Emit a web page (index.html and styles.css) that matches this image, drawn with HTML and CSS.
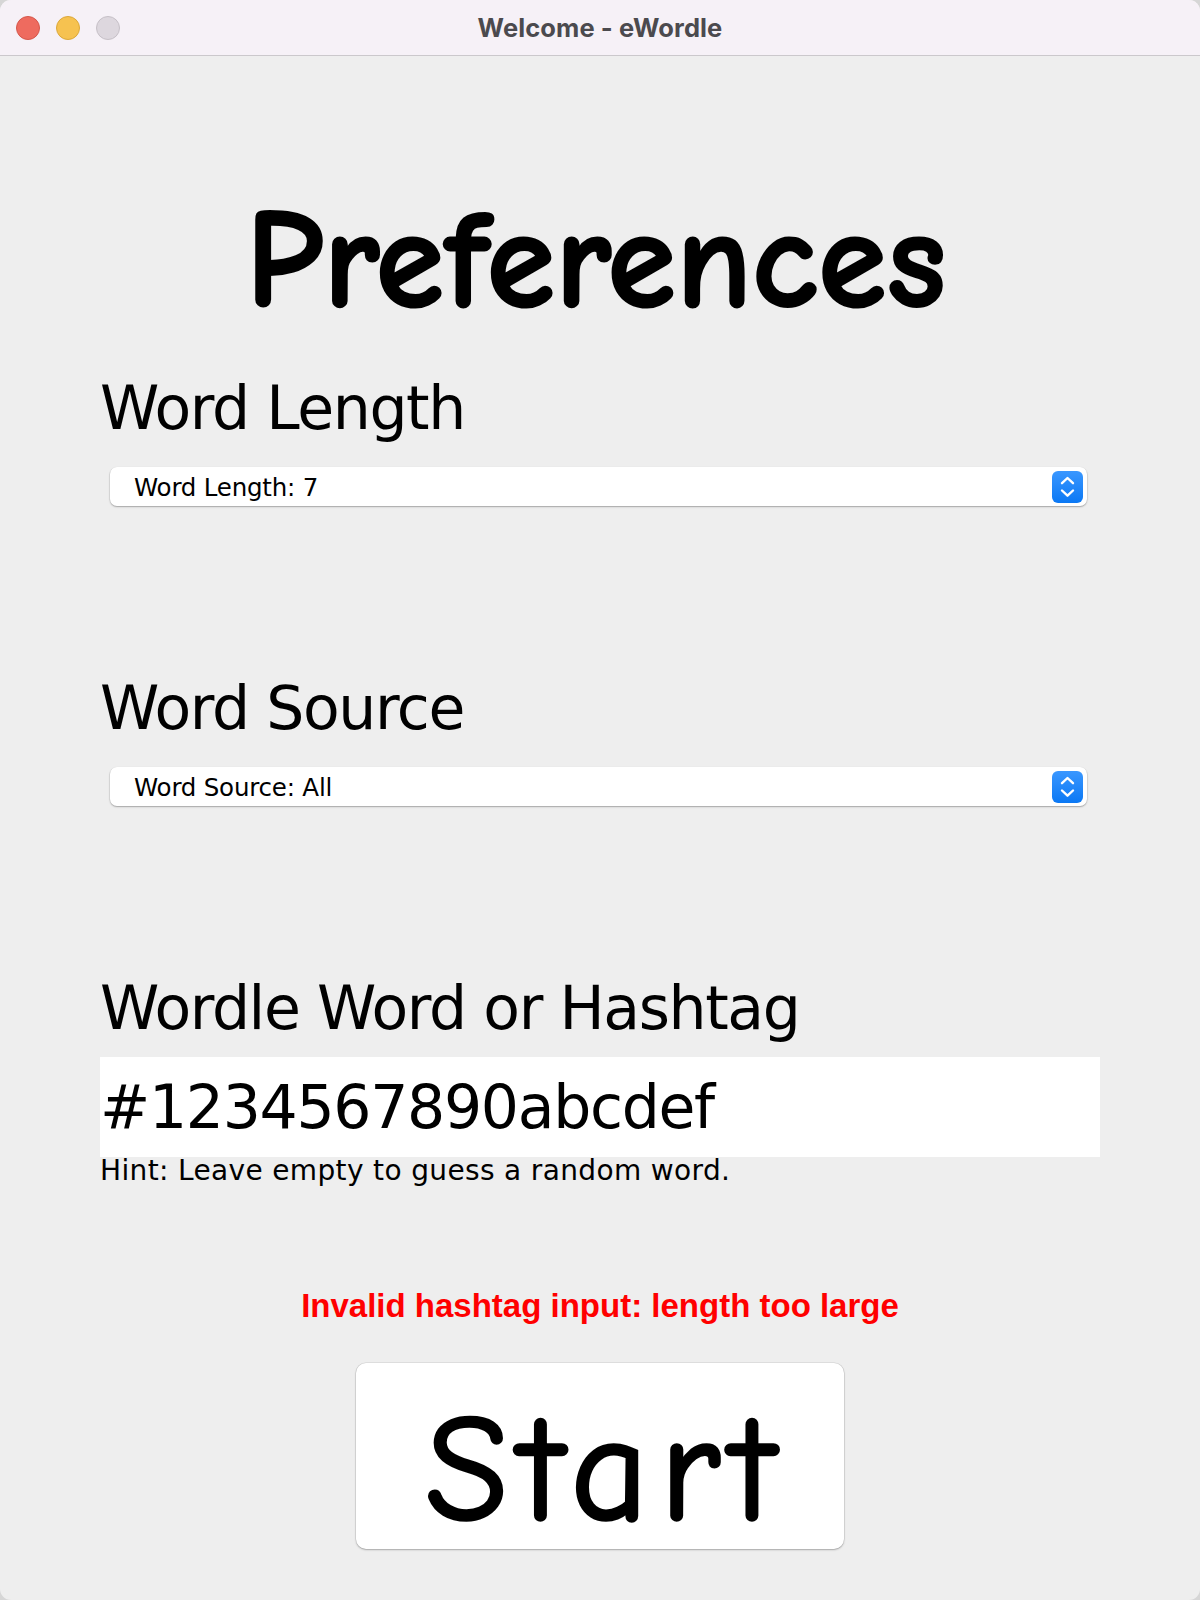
FILE: index.html
```html
<!DOCTYPE html>
<html lang="en">
<head>
<meta charset="utf-8">
<title>Welcome - eWordle</title>
<link rel="stylesheet" href="styles.css">
</head>
<body>
<div class="window">
  <div class="titlebar">
    <div class="lights">
      <span class="light red"></span>
      <span class="light yellow"></span>
      <span class="light grey"></span>
    </div>
    <div class="title">Welcome - eWordle</div>
  </div>
  <div class="content">
    <h1 class="prefs">Preferences</h1>

    <h2 class="heading first">Word Length</h2>
    <div class="select">
      <span class="select-text">Word Length: 7</span>
      <span class="stepper">
        <svg width="31" height="32" viewBox="0 0 31 32"><path d="M10 12.2 L15.5 7 L21 12.2 M10 19.5 L15.5 24.7 L21 19.5" fill="none" stroke="#fff" stroke-width="2.4" stroke-linecap="round" stroke-linejoin="round"/></svg>
      </span>
    </div>

    <h2 class="heading">Word Source</h2>
    <div class="select">
      <span class="select-text">Word Source: All</span>
      <span class="stepper">
        <svg width="31" height="32" viewBox="0 0 31 32"><path d="M10 12.2 L15.5 7 L21 12.2 M10 19.5 L15.5 24.7 L21 19.5" fill="none" stroke="#fff" stroke-width="2.4" stroke-linecap="round" stroke-linejoin="round"/></svg>
      </span>
    </div>

    <h2 class="heading">Wordle Word or Hashtag</h2>
    <div class="field">#1234567890abcdef</div>
    <div class="hint">Hint: Leave empty to guess a random word.</div>

    <div class="error">Invalid hashtag input: length too large</div>

    <div class="start-row">
      <button class="start">Start</button>
    </div>
  </div>
</div>
</body>
</html>
```
FILE: styles.css
```css
html, body {
  margin: 0;
  padding: 0;
  background: #d6d6d6;
}

.window {
  width: 1200px;
  height: 1600px;
  background: #eeeeee;
  border-radius: 11px;
  overflow: hidden;
  position: relative;
}

.titlebar {
  height: 55px;
  border-bottom: 1px solid #cbc8cc;
  background: #f6f1f7;
  display: flex;
  align-items: center;
  justify-content: center;
  position: relative;
}

.lights {
  position: absolute;
  left: 16px;
  top: 16px;
  display: flex;
  gap: 16px;
}

.light {
  width: 22px;
  height: 22px;
  border-radius: 50%;
  display: block;
}
.light.red { background: #ee6b5f; border: 1px solid #d5574b; }
.light.yellow { background: #f6c250; border: 1px solid #dca83a; }
.light.grey { background: #ddd7de; border: 1px solid #c6c0c7; }

.title {
  font-family: Inter, "Liberation Sans", sans-serif;
  font-weight: 700;
  font-size: 25.5px;
  color: #4b4a4e;
  letter-spacing: 0.1px;
  margin-top: -1px;
}

.content {
  padding-left: 100px;
  padding-right: 100px;
}

.prefs {
  margin: 140px 0 0 -8px;
  font-family: "Comic Sans MS", "Comic Neue", Roboto, sans-serif;
  font-weight: 700;
  font-size: 140px;
  line-height: 130px;
  text-align: center;
  color: #000;
  letter-spacing: 0;
  -webkit-text-stroke: 2px #000;
}

.heading {
  margin: 167px 0 0 0;
  font-family: "Lucida Grande", "DejaVu Sans", sans-serif;
  font-weight: 400;
  font-size: 60px;
  line-height: 70px;
  letter-spacing: -1.4px;
  color: #000;
}
.heading.first { margin-top: 47px; }

.select {
  margin: 24px 0 0 10px;
  width: 977px;
  height: 39px;
  box-sizing: border-box;
  background: #fff;
  border-radius: 7px;
  box-shadow: 0 0.5px 0 0.5px rgba(0,0,0,0.10), 0 1px 2px rgba(0,0,0,0.22);
  display: flex;
  align-items: center;
  justify-content: space-between;
  padding: 0 4px 0 24px;
}

.select-text {
  font-family: "Lucida Grande", "DejaVu Sans", sans-serif;
  font-size: 24.5px;
  color: #000;
  letter-spacing: -0.2px;
  margin-top: 1px;
}

.stepper {
  width: 31px;
  height: 32px;
  border-radius: 6px;
  background: linear-gradient(#3a97ff, #0b78f4);
  display: block;
}
.stepper svg { display: block; }

.field {
  margin-top: 14px;
  width: 1000px;
  height: 100px;
  background: #fff;
  font-family: "Lucida Grande", "DejaVu Sans", sans-serif;
  font-size: 60px;
  line-height: 100px;
  letter-spacing: -1.3px;
  color: #000;
}

.hint {
  font-family: "Lucida Grande", "DejaVu Sans", sans-serif;
  font-size: 28px;
  line-height: 28px;
  letter-spacing: 0.35px;
  color: #000;
}

.error {
  margin-top: 101px;
  font-family: "Lucida Grande", "Liberation Sans", sans-serif;
  font-weight: 700;
  font-size: 33px;
  line-height: 40px;
  text-align: center;
  color: #ff0000;
}

.start-row {
  margin-top: 37px;
  display: flex;
  justify-content: center;
}

.start {
  width: 488px;
  height: 186px;
  box-sizing: border-box;
  padding: 28px 0 0 12px;
  margin: 0;
  border: none;
  background: #fff;
  border-radius: 10px;
  box-shadow: 0 0 0 0.5px rgba(0,0,0,0.12), 0 1px 2px rgba(0,0,0,0.25);
  font-family: "Comic Sans MS", "Comic Neue", Roboto, sans-serif;
  font-weight: 400;
  font-size: 150px;
  line-height: 145px;
  letter-spacing: 12px;
  -webkit-text-stroke: 3.5px #000;
  color: #000;
  text-align: center;
  vertical-align: top;
  display: block;
}
```
